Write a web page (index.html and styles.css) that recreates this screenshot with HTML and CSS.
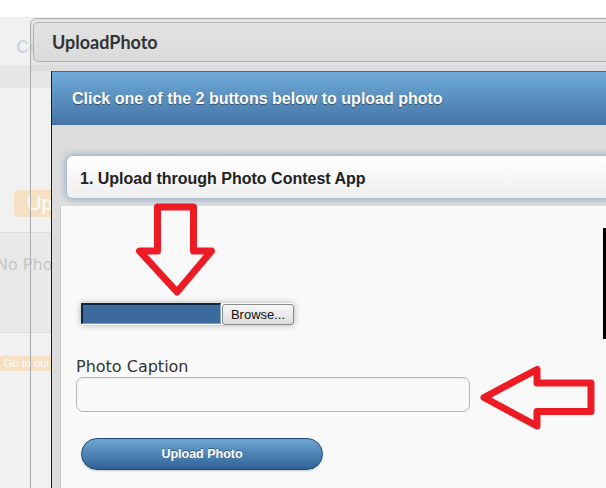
FILE: index.html
```html
<!DOCTYPE html>
<html lang="en">
<head>
<meta charset="UTF-8">
<meta name="viewport" content="width=device-width, initial-scale=1.0">
<title>UploadPhoto</title>
<link rel="stylesheet" href="styles.css">
</head>
<body>

<!-- page behind the dialog -->
<div class="bg">
  <div class="bg-top"></div>
  <div class="bg-nav"><span class="bg-logo">Co</span></div>
  <div class="bg-strip"></div>
  <div class="bg-main">
    <span class="bg-btn">Upl</span>
    <div class="bg-photos"><span class="bg-empty">No Phot</span></div>
    <span class="bg-go">Go to our</span>
  </div>
</div>

<div class="dialog">
  <div class="dlg-bar">
    <div class="dlg-title">UploadPhoto</div>
  </div>

  <div class="frame">
    <div class="frame-head">Click one of the 2 buttons below to upload photo</div>
    <div class="frame-body">
      <div class="step">1. Upload through Photo Contest App</div>

      <div class="panel">
        <div class="file">
          <span class="file-field"></span>
          <span class="file-btn">Browse...</span>
        </div>

        <label class="cap-label" for="caption">Photo Caption</label>
        <input class="cap-input" type="text" id="caption" name="caption">

        <button class="upload-btn" type="button">Upload Photo</button>
      </div>
    </div>
  </div>
</div>

<!-- annotations drawn on top of the screenshot -->
<svg class="marks" width="606" height="488" viewBox="0 0 606 488">
  <polygon points="157.5,207 193.5,207 193.5,251 211.5,251 177,292 139.5,251 157.5,251"
           fill="none" stroke="#ed1c24" stroke-width="7" stroke-linejoin="round"/>
  <polygon points="484,397.5 537,369.5 537,383 591,383 591,411.5 537,411.5 537,426"
           fill="none" stroke="#ed1c24" stroke-width="7" stroke-linejoin="round"/>
  <rect x="603" y="228" width="3" height="111" fill="#000"/>
</svg>

</body>
</html>
```

FILE: styles.css
```css
body {
  margin: 0;
  width: 606px;
  height: 488px;
  overflow: hidden;
  position: relative;
  background: #fff;
  font-family: 'Liberation Sans', Arial, sans-serif;
}

/* Страница под диалогом */
.bg-top { height: 17px; }
.bg-nav {
  height: 48px;
  padding-top: 20px;
  box-sizing: border-box;
  background: #f1f1f1;
}
.bg-logo {
  display: block;
  padding-left: 16px;
  font-size: 18px;
  line-height: 20px;
  font-weight: bold;
  color: #c9d9e8;
}
.bg-strip { height: 23px; background: #e7e7e7; }
.bg-main {
  height: 400px;
  padding-top: 102px;
  box-sizing: border-box;
  background: #f1f1f1;
}
.bg-btn {
  display: inline-block;
  margin-left: 14px;
  height: 27px;
  padding: 0 10px 0 13px;
  line-height: 27px;
  font-size: 20px;
  color: #fff;
  background: #f6e0c4;
  border-radius: 5px;
}
.bg-photos {
  margin-top: 15px;
  height: 101px;
  padding-top: 22px;
  box-sizing: border-box;
  border-top: 1px solid #dcdcdc;
  border-bottom: 1px solid #dcdcdc;
  background: #e9e9e9;
}
.bg-empty {
  display: block;
  margin-left: -4px;
  font-family: 'DejaVu Sans', sans-serif;
  font-size: 16px;
  color: #c6c6c6;
}
.bg-go {
  display: inline-block;
  margin-top: 23px;
  height: 15px;
  padding: 0 6px 0 4px;
  line-height: 15px;
  font-size: 11px;
  color: #fff;
  background: #f6e0c4;
}

/* Диалог */
.dialog {
  position: absolute;
  left: 30px;
  top: 18px;
  width: 640px;
  height: 480px;
  border: 1px solid #aaa;
  border-radius: 6px 0 0 0;
  overflow: hidden;
}
.dlg-bar {
  background: rgba(200,200,200,0.3);
  padding: 3px 0 9px 2px;
}
.dlg-title {
  height: 38px;
  padding-left: 18px;
  border: 1px solid #b2b2b2;
  border-radius: 5px;
  background: linear-gradient(#e3e3e3, #dadada);
  font-family: Lato, 'Open Sans', sans-serif;
  font-weight: 700;
  font-size: 18px;
  line-height: 38px;
  color: #333;
}

.frame {
  margin-left: 20px;
  border-left: 1px solid #1c1c1c;
  height: 420px;
}
.frame-head {
  height: 50px;
  padding: 1px 0 2px 20px;
  border-top: 1px solid #3a679a;
  background: linear-gradient(#6eaad8, #4574a6);
  font-weight: bold;
  font-size: 16px;
  line-height: 51px;
  color: #fff;
  text-shadow: 0 1px 1px rgba(0,0,0,0.45);
}
.frame-body {
  background: #dcdcdc;
  padding-top: 31px;
  height: 400px;
}
.step {
  margin-left: 15px;
  height: 40px;
  padding: 2px 0 0 13px;
  border-radius: 6px 0 0 6px;
  background: linear-gradient(#fff, #efefef);
  box-shadow: 0 0 7px 1px rgba(70,120,180,0.55);
  font-weight: bold;
  font-size: 16px;
  line-height: 42px;
  color: #222;
}

.panel {
  margin: 8px 0 0 8px;
  height: 300px;
  padding-top: 97px;
  box-sizing: border-box;
  border-left: 1px solid #c9c9c9;
  background: #f9f9f9;
}

/* Поле выбора файла */
.file {
  display: flex;
  width: 213px;
  margin-left: 20px;
  border-radius: 3px;
  box-shadow: 0 0 6px rgba(0,0,0,0.3);
}
.file-field {
  width: 137px;
  height: 18px;
  border-top: 2px solid #0c2845;
  border-left: 2px solid #0c2845;
  border-right: 1px solid #86a7c8;
  border-bottom: 1px solid #7e9fc0;
  background: #3a6b9c;
}
.file-btn {
  width: 70px;
  height: 19px;
  margin: 1px 0 0 1px;
  border: 1px solid #8a8a8a;
  border-radius: 3px;
  background: linear-gradient(#f7f7f7, #dcdcdc);
  font-size: 13px;
  line-height: 19px;
  text-align: center;
  color: #111;
}

.cap-label {
  display: block;
  margin: 32px 0 0 15px;
  font-family: 'DejaVu Sans', sans-serif;
  font-size: 16px;
  line-height: 19px;
  color: #333;
}
.cap-input {
  display: block;
  margin: 1px 0 0 15px;
  width: 394px;
  height: 35px;
  box-sizing: border-box;
  border: 1px solid #b4b4b4;
  border-radius: 7px;
  background: #f9f9f9;
  box-shadow: inset 0 1px 2px rgba(0,0,0,0.06);
}

.upload-btn {
  display: block;
  margin: 26px 0 0 20px;
  width: 242px;
  height: 32px;
  border: 1px solid #1f4c78;
  border-radius: 16px;
  background: linear-gradient(#6ea6d3, #2f6296);
  font-family: 'Liberation Sans', Arial, sans-serif;
  font-weight: bold;
  font-size: 12.5px;
  color: #fff;
  text-shadow: 0 -1px 0 rgba(0,0,0,0.35);
  box-shadow: 0 1px 2px rgba(0,0,0,0.2);
}

/* Пометки поверх картинки */
.marks {
  position: absolute;
  left: 0;
  top: 0;
  z-index: 10;
  pointer-events: none;
}
```
